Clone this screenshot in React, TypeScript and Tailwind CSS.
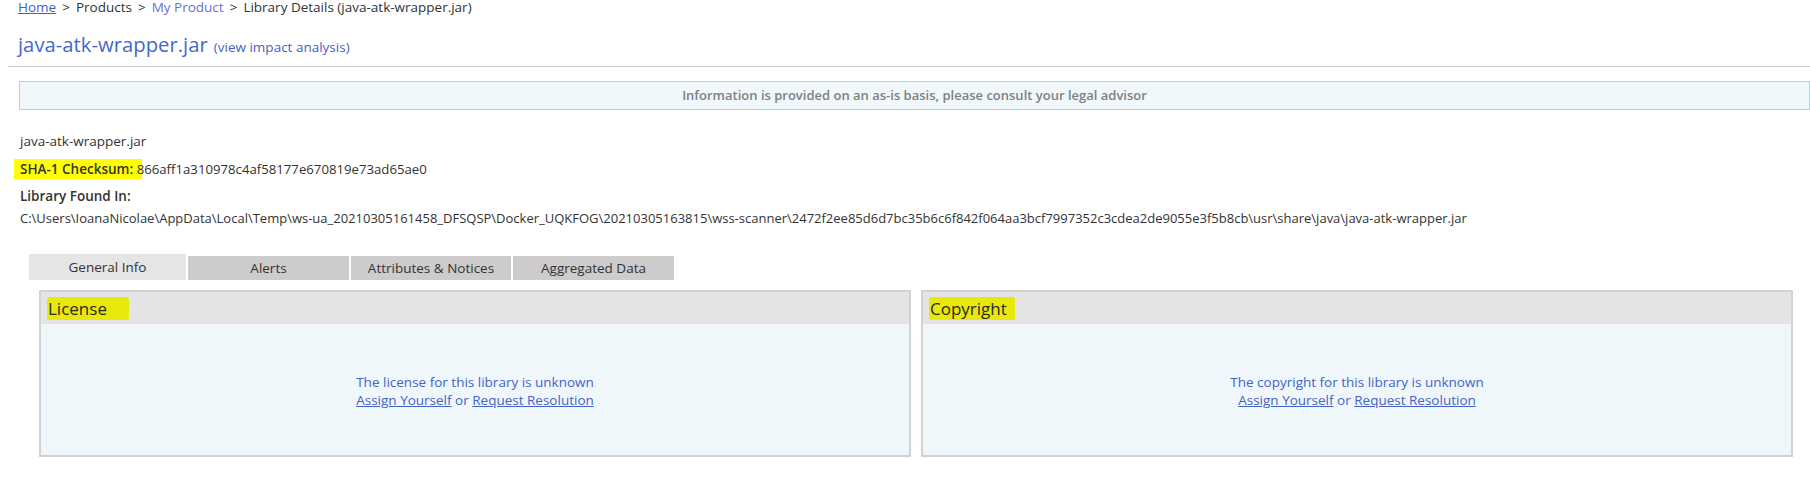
import React from "react";

const path =
  "C:\\Users\\IoanaNicolae\\AppData\\Local\\Temp\\ws-ua_20210305161458_DFSQSP\\Docker_UQKFOG\\20210305163815\\wss-scanner\\2472f2ee85d6d7bc35b6c6f842f064aa3bcf7997352c3cdea2de9055e3f5b8cb\\usr\\share\\java\\java-atk-wrapper.jar";

function Panel({ title, what, tail }: { title: string; what: string; tail: string }) {
  return (
    <div className="flex-1 h-[167px] border-2 border-[#d2d2d2] bg-[#f0f7fb] flex flex-col">
      <div className="h-[32px] bg-[#e4e4e4] flex items-start">
        <span
          className={`mt-[5px] ml-[6px] h-[23px] leading-[23px] pl-[1px] ${tail} bg-[#e8e80c] rounded-[2px] text-[17px] text-[#2b2b10]`}
        >
          {title}
        </span>
      </div>
      <div className="pt-[49px] text-center text-[13.5px] leading-[18px] text-[#4562c9]">
        <div>The {what} for this library is unknown</div>
        <div>
          <a className="underline cursor-pointer">Assign Yourself</a>
          <span> or </span>
          <a className="underline cursor-pointer">Request Resolution</a>
        </div>
      </div>
    </div>
  );
}

export default function App() {
  const tabs = [
    { label: "General Info", w: "w-[157px]", active: true },
    { label: "Alerts", w: "w-[161px]", active: false },
    { label: "Attributes & Notices", w: "w-[160px]", active: false },
    { label: "Aggregated Data", w: "w-[161px]", active: false },
  ];

  return (
    <div className="w-[1810px] h-[484px] overflow-hidden bg-white text-[#333] text-[13.5px] font-['Open_Sans','Noto_Sans',sans-serif]">
      {/* breadcrumb */}
      <div className="pl-[18px] h-[14px] leading-[14px] text-[13.5px] whitespace-nowrap">
        <a className="text-[#3f5fc8] underline cursor-pointer">Home</a>
        <span className="mx-[6px]">&gt;</span>
        <span>Products</span>
        <span className="mx-[6px]">&gt;</span>
        <a className="text-[#6a6fd6] cursor-pointer">My Product</a>
        <span className="mx-[6px]">&gt;</span>
        <span>Library Details (java-atk-wrapper.jar)</span>
      </div>

      {/* title */}
      <div className="mt-[16px] pl-[18px] h-[28px] flex items-baseline gap-[6px] whitespace-nowrap">
        <span className="text-[20.3px] leading-[28px] text-[#4468cc]">java-atk-wrapper.jar</span>
        <a className="text-[13.5px] text-[#4a5fc4] cursor-pointer">(view impact analysis)</a>
      </div>

      <div className="mt-[8px] ml-[8px] h-px bg-[#c8c8c8]" />

      {/* disclaimer */}
      <div className="mt-[14px] ml-[19px] h-[29px] border border-[#a9d8e6] border-b-[#b4d0da] bg-[#f0f8fb] flex items-center justify-center text-[13px] font-semibold text-[#808080]">
        Information is provided on an as-is basis, please consult your legal advisor
      </div>

      {/* library details */}
      <div className="pl-[20px]">
        <div className="mt-[21px] h-[20px] leading-[20px]">java-atk-wrapper.jar</div>
        <div className="mt-[8px] h-[20px] leading-[20px] relative whitespace-nowrap">
          <div className="absolute left-[-6px] top-0 w-[128px] h-[20px] bg-[#ffff00]" />
          <span className="relative font-semibold">SHA-1 Checksum: </span>
          <span className="relative text-[13.2px]">866aff1a310978c4af58177e670819e73ad65ae0</span>
        </div>
        <div className="mt-[7px] h-[20px] leading-[20px] font-semibold">Library Found In:</div>
        <div className="mt-[2px] h-[20px] leading-[20px] text-[13px] whitespace-nowrap">{path}</div>
      </div>

      {/* tabs */}
      <div className="mt-[26px] ml-[29px] flex items-end gap-[2px]">
        {tabs.map((t) => (
          <div
            key={t.label}
            className={
              t.active
                ? `${t.w} h-[26px] bg-[#e5e5e5] flex items-center justify-center text-[13.5px] text-[#333]`
                : `${t.w} h-[24px] bg-[#cdcbcb] flex items-center justify-center text-[13.5px] text-[#333]`
            }
          >
            {t.label}
          </div>
        ))}
      </div>

      {/* panels */}
      <div className="mt-[10px] ml-[39px] mr-[17px] flex gap-[10px]">
        <Panel title="License" what="license" tail="pr-[22px]" />
        <Panel title="Copyright" what="copyright" tail="pr-[8px]" />
      </div>
    </div>
  );
}
